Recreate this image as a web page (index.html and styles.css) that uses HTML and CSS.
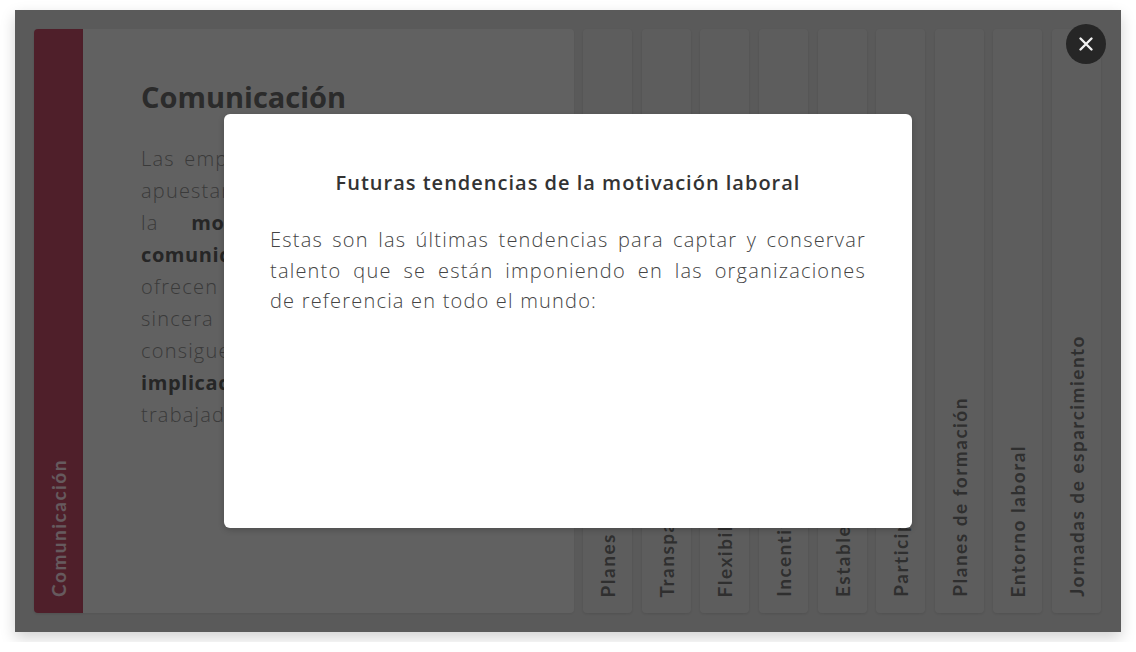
FILE: index.html
```html
<!DOCTYPE html>
<html lang="es">
<head>
    <meta charset="UTF-8">
    <meta name="viewport" content="width=device-width, initial-scale=1.0">
    <title>Motivación laboral</title>
    <link rel="stylesheet" href="styles.css">
</head>
<body>
    <div class="app">
        <div class="accordion">
            <div class="item active">
                <div class="tab"><span class="label">Comunicación</span></div>
                <div class="panel">
                    <h2>Comunicación</h2>
                    <p>Las empresas que actualmente más apuestan firmemente por potenciar la <b>motivación interna y la comunicación con su equipo</b> ofrecen una información clara y sincera a toda su plantilla y así consiguen una mayor y más sólida <b>implicación personal</b> de sus trabajadores.</p>
                </div>
            </div>
            <div class="item"><div class="tab"><span class="label">Planes de carrera</span></div></div>
            <div class="item"><div class="tab"><span class="label">Transparencia</span></div></div>
            <div class="item"><div class="tab"><span class="label">Flexibilidad</span></div></div>
            <div class="item"><div class="tab"><span class="label">Incentivos</span></div></div>
            <div class="item"><div class="tab"><span class="label">Establecer metas</span></div></div>
            <div class="item"><div class="tab"><span class="label">Participación</span></div></div>
            <div class="item"><div class="tab"><span class="label">Planes de formación</span></div></div>
            <div class="item"><div class="tab"><span class="label">Entorno laboral</span></div></div>
            <div class="item"><div class="tab"><span class="label">Jornadas de esparcimiento</span></div></div>
        </div>

        <div class="overlay">
            <button class="close" aria-label="Cerrar">
                <svg width="16" height="16" viewBox="0 0 16 16">
                    <path d="M2.5 2.5 L13.5 13.5 M13.5 2.5 L2.5 13.5" stroke="#f2f2f2" stroke-width="2.4" stroke-linecap="round"/>
                </svg>
            </button>
            <div class="modal">
                <h3>Futuras tendencias de la motivación laboral</h3>
                <p>Estas son las últimas tendencias para captar y conservar talento que se están imponiendo en las organizaciones de&nbsp;referencia en todo el mundo:</p>
            </div>
        </div>
    </div>
</body>
</html>
```

FILE: styles.css
```css
body {
    margin: 0;
    background-color: #fff;
    font-family: "Open Sans", Arial, sans-serif;
}
.app {
    position: relative;
    margin: 10px 15px;
    height: 622px;
    box-sizing: border-box;
    padding: 19px 20px 19px 19px;
    background-color: #e2e2e2;
    box-shadow: 0 6px 14px rgba(0, 0, 0, 0.18);
}
.accordion {
    display: flex;
    gap: 9.6px;
    height: 100%;
}
.item {
    display: flex;
    width: 49px;
    flex-shrink: 0;
}
.item.active {
    flex: 1;
}
.tab {
    width: 49px;
    flex-shrink: 0;
    display: flex;
    flex-direction: column;
    justify-content: flex-end;
    align-items: center;
    padding-bottom: 16px;
    box-sizing: border-box;
    background-color: #e9e9e9;
    border-radius: 4px;
    box-shadow: 0 1px 3px rgba(0, 0, 0, 0.12);
    overflow: hidden;
}
.label {
    writing-mode: vertical-rl;
    transform: rotate(180deg);
    white-space: nowrap;
    font-family: Lato, "Open Sans", sans-serif;
    font-weight: 700;
    font-size: 19px;
    letter-spacing: 1.5px;
    color: #777;
}
.active .tab {
    background-color: #c64e69;
    border-radius: 4px 0 0 4px;
}
.active .label {
    color: #ffe1eb;
}
.panel {
    flex: 1;
    background-color: #f2f2f2;
    border-radius: 0 4px 4px 0;
    padding: 48px 58px 0 58px;
    box-shadow: 0 1px 3px rgba(0, 0, 0, 0.08);
}
.panel h2 {
    margin: 0 0 27px 0;
    font-size: 29px;
    font-weight: 700;
    color: #6b6b6b;
}
.panel p {
    margin: 0;
    font-size: 20px;
    font-weight: 300;
    letter-spacing: 1.2px;
    line-height: 32px;
    text-align: justify;
    color: #929292;
}
.panel b {
    font-weight: 700;
    letter-spacing: 0.6px;
    color: #5f5f5f;
}
.overlay {
    position: absolute;
    top: 0;
    left: 0;
    right: 0;
    bottom: 0;
    display: flex;
    align-items: center;
    justify-content: center;
    background-color: rgba(0, 0, 0, 0.6);
}
.close {
    position: absolute;
    top: 14px;
    right: 15px;
    width: 40px;
    height: 40px;
    border: none;
    border-radius: 50%;
    background-color: #262626;
    display: flex;
    align-items: center;
    justify-content: center;
    padding: 0;
    cursor: pointer;
}
.modal {
    width: 688px;
    height: 414px;
    box-sizing: border-box;
    padding: 55px 46px 0 46px;
    background-color: #fff;
    border-radius: 6px;
    box-shadow: 0 2px 6px rgba(0, 0, 0, 0.2);
}
.modal h3 {
    margin: 0 0 28px 0;
    font-size: 20px;
    font-weight: 600;
    letter-spacing: 1px;
    line-height: 28px;
    text-align: center;
    color: #333;
}
.modal p {
    margin: 0;
    font-size: 20px;
    font-weight: 300;
    letter-spacing: 1.2px;
    line-height: 30.5px;
    text-align: justify;
    color: #444;
}
```
